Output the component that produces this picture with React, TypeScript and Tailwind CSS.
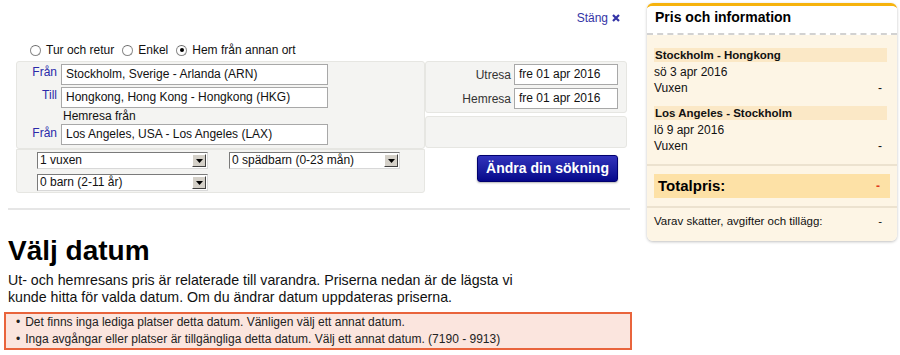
import React from 'react'

function Radio({ checked, label }: { checked?: boolean; label: string }) {
  return (
    <label className="flex items-center gap-[5px]">
      <span className="w-[11px] h-[11px] rounded-full border border-[#8a8a8a] border-t-[#6a6a6a] bg-white flex items-center justify-center">
        {checked && <span className="w-[4px] h-[4px] rounded-full bg-black" />}
      </span>
      <span>{label}</span>
    </label>
  )
}

function Field({ value, w }: { value: string; w: string }) {
  return (
    <div className={`${w} h-[21px] bg-white border border-[#a8a8a8] pl-[4px] leading-[19px] text-[12px] text-[#111] whitespace-nowrap overflow-hidden`}>
      {value}
    </div>
  )
}

function Dropdown({ value }: { value: string }) {
  return (
    <div className="w-[171px] h-[17px] bg-white border border-[#7a7a7a] border-r-[#d8d8d8] border-b-[#d8d8d8] flex items-stretch">
      <div className="flex-1 pl-[2px] leading-[15px] text-[12px] text-[#111] whitespace-nowrap">{value}</div>
      <div className="w-[14px] my-[1px] mr-[1px] bg-[#d4d0c8] border border-white border-r-[#404040] border-b-[#404040] flex items-center justify-center">
        <svg width="7" height="4" viewBox="0 0 7 4">
          <path d="M0 0 H7 L3.5 4 Z" fill="#000" />
        </svg>
      </div>
    </div>
  )
}

function PriceRow({ left, right }: { left: string; right?: string }) {
  return (
    <div className="flex justify-between pr-[8px] leading-[16px] text-[12px] text-[#111]">
      <span>{left}</span>
      {right && <span>{right}</span>}
    </div>
  )
}

export default function App() {
  return (
    <div className="flex w-[900px] h-[355px] bg-white overflow-hidden font-['Liberation_Sans',Arial,sans-serif] text-[12px] text-[#111]">
      {/* Search form and results */}
      <div className="w-[640px]">
        <div className="h-[43px] flex justify-end items-start pt-[11px] pr-[20px]">
          <a className="flex items-center gap-[4px] text-[#3434a6] leading-[14px]">
            Stäng
            <svg width="8" height="8" viewBox="0 0 8 8">
              <path d="M1 1 L7 7 M7 1 L1 7" stroke="#3434a6" strokeWidth="2.2" />
            </svg>
          </a>
        </div>

        <div className="h-[14px] flex items-center gap-[8px] pl-[30px] leading-[14px]">
          <Radio label="Tur och retur" />
          <Radio label="Enkel" />
          <Radio checked label="Hem från annan ort" />
        </div>

        <div className="mt-[4px] ml-[16px]">
          <div className="flex">
            <div className="w-[409px] h-[88px] bg-[#f4f4f2] border border-[#e6e6e2] rounded-[3px] pt-[2px]">
              <div className="flex items-start">
                <div className="w-[44px] text-right pr-[4px] text-[#2a2aaa] leading-[16px]">Från</div>
                <Field w="w-[267px]" value="Stockholm, Sverige - Arlanda (ARN)" />
              </div>
              <div className="flex items-start mt-[2px]">
                <div className="w-[44px] text-right pr-[4px] text-[#2a2aaa] leading-[16px]">Till</div>
                <Field w="w-[267px]" value="Hongkong, Hong Kong - Hongkong (HKG)" />
              </div>
              <div className="pl-[46px] leading-[15px] mt-[1px]">Hemresa från</div>
              <div className="flex items-start">
                <div className="w-[44px] text-right pr-[4px] text-[#2a2aaa] leading-[18px]">Från</div>
                <Field w="w-[267px]" value="Los Angeles, USA - Los Angeles (LAX)" />
              </div>
            </div>
            <div className="w-[202px]">
              <div className="h-[52px] bg-[#f4f4f2] border border-[#e6e6e2] rounded-[3px] pt-[2px] pr-[8px] flex flex-col items-end gap-[3px]">
                <div className="flex items-center gap-[3px]">
                  <span className="text-[#333]">Utresa</span>
                  <Field w="w-[104px]" value="fre 01 apr 2016" />
                </div>
                <div className="flex items-center gap-[3px]">
                  <span className="text-[#333]">Hemresa</span>
                  <Field w="w-[104px]" value="fre 01 apr 2016" />
                </div>
              </div>
              <div className="mt-[3px] h-[32px] bg-[#f4f4f2] border border-[#e6e6e2] rounded-[3px]" />
            </div>
          </div>

          <div className="flex">
            <div className="w-[409px] h-[44px] bg-[#f4f4f2] border border-[#e6e6e2] rounded-b-[3px] pt-[2px] pl-[20px]">
              <div className="flex gap-[21px]">
                <Dropdown value="1 vuxen" />
                <Dropdown value="0 spädbarn (0-23 mån)" />
              </div>
              <div className="mt-[5px]">
                <Dropdown value="0 barn (2-11 år)" />
              </div>
            </div>
            <div className="pl-[52px] pt-[6px]">
              <button className="w-[141px] h-[27px] rounded-[3px] border border-[#00006e] bg-gradient-to-b from-[#3232bc] to-[#06068a] text-white font-bold text-[14px] leading-[25px] shadow-[0_1px_2px_rgba(0,0,0,0.3)]">
                Ändra din sökning
              </button>
            </div>
          </div>
        </div>

        <div className="mt-[15px] ml-[8px] w-[622px] h-[2px] bg-[#e6e6e6]" />

        <h1 className="mt-[25px] pl-[8px] text-[28px] leading-[32px] font-bold text-black">Välj datum</h1>
        <p className="mt-[5px] pl-[8px] pr-[110px] text-[14.2px] leading-[17px] text-[#111]">
          Ut- och hemresans pris är relaterade till varandra. Priserna nedan är de lägsta vi kunde hitta för valda datum. Om du ändrar datum uppdateras priserna.
        </p>
        <ul className="mt-[6px] ml-[4px] w-[628px] h-[38px] border-2 border-[#e9643c] bg-[#fbe5de] pl-[10px] text-[12px] leading-[17px] text-[#222]">
          <li className="flex gap-[5px]"><span>•</span>Det finns inga lediga platser detta datum. Vänligen välj ett annat datum.</li>
          <li className="flex gap-[5px]"><span>•</span>Inga avgångar eller platser är tillgängliga detta datum. Välj ett annat datum. (7190 - 9913)</li>
        </ul>
      </div>

      {/* Price sidebar */}
      <div className="ml-[7px] mt-[3px] w-[250px] h-[238px] rounded-[6px] border-t-[3px] border-[#f6b30d] shadow-[0_1px_3px_rgba(0,0,0,0.25)] overflow-hidden flex flex-col">
        <div className="h-[29px] bg-white border-b-2 border-dashed border-[#d2d2d2] pl-[8px] pt-[3px] text-[14px] leading-[17px] font-bold text-black">
          Pris och information
        </div>
        <div className="flex-1 bg-[#fdf5e5] pt-[13px]">
          <div className="px-[7px]">
            <div className="mr-[3px] bg-[#fbe8c6] pl-[1px] text-[11.5px] leading-[14px] font-bold">Stockholm - Hongkong</div>
            <div className="mt-[2px]"><PriceRow left="sö 3 apr 2016" /></div>
            <PriceRow left="Vuxen" right="-" />
            <div className="mt-[10px] mr-[3px] bg-[#fbe8c6] pl-[1px] text-[11.5px] leading-[14px] font-bold">Los Angeles - Stockholm</div>
            <div className="mt-[2px]"><PriceRow left="lö 9 apr 2016" /></div>
            <PriceRow left="Vuxen" right="-" />
          </div>
          <div className="mt-[10px] h-[2px] bg-[#ece2cf]" />
          <div className="px-[7px] mt-[8px]">
            <div className="h-[24px] bg-[#fde1a6] flex items-center justify-between pl-[4px] pr-[10px]">
              <span className="text-[15px] font-bold text-black">Totalpris:</span>
              <span className="text-[#e03a1e] font-bold">-</span>
            </div>
          </div>
          <div className="mt-[8px] h-[2px] bg-[#ece2cf]" />
          <div className="px-[7px] mt-[5px] flex justify-between pr-[15px] text-[11.5px] leading-[16px]">
            <span>Varav skatter, avgifter och tillägg:</span>
            <span>-</span>
          </div>
        </div>
      </div>
    </div>
  )
}
